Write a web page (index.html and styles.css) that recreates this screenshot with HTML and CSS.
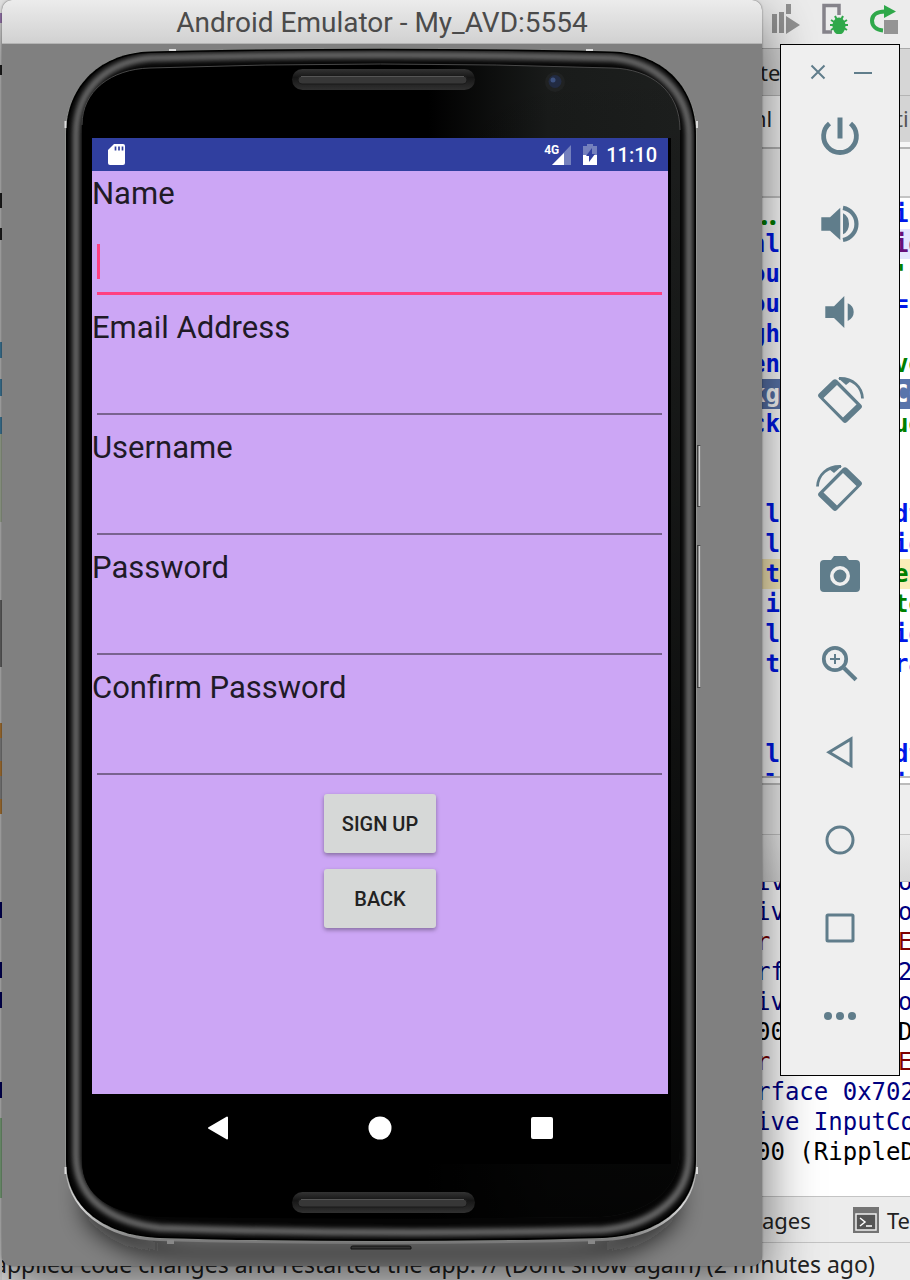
FILE: index.html
```html
<!DOCTYPE html>
<html lang="en">
<head>
<meta charset="utf-8">
<title>Android Emulator - My_AVD:5554</title>
<link rel="stylesheet" href="styles.css">
</head>
<body>
<div class="desktop">

  <main class="ide">
    <div class="gutter"></div>
    <div class="ide-tools">
      <svg width="30" height="32" viewBox="0 0 30 32" fill="#929292"><path d="M1 12h5v19H1zM8 10h5v21H8zM15 2h5v10h-5zM15 14l14 9-14 9z"/></svg>
      <svg width="28" height="32" viewBox="0 0 28 32"><path d="M11 30H3V3.500h15V13" fill="none" stroke="#85838a" stroke-width="3.500"/><path d="M10 18l16 10M10 28l16-10M9 23h18M14 14l2 4M22 14l-2 4" stroke="#2fa84a" stroke-width="2"/><ellipse cx="18" cy="24" rx="6.500" ry="8.500" fill="#2fa84a"/></svg>
      <svg width="30" height="32" viewBox="0 0 30 32"><path d="M14 28.500C7 28 3 24 3 18.500 3 13 8 9.500 16 9.500" fill="none" stroke="#2fa84a" stroke-width="4"/><path d="M15 3l12 6.500L15 16z" fill="#2fa84a"/><path d="M15 18h14v14H15z" fill="#949494"/></svg>
    </div>
    <div class="ide-nav"><span>te</span></div>
    <div class="ide-tabs"><span>ml</span><span class="tab-idle">ti</span></div>
    <div class="ide-crumb"></div>
    <div class="editor">
      <div class="line"><b class="str fold">..</b><b>in</b></div>
      <div class="line"><b>nl</b><b class="attr">id</b></div>
      <div class="line"><b>ou</b><b class="str">'n</b></div>
      <div class="line"><b>ou</b><b>="</b></div>
      <div class="line"><b>gh</b></div>
      <div class="line"><b>en</b><b class="str">ve</b></div>
      <div class="line selected"><b>kg</b><b>CC</b></div>
      <div class="line"><b>ck</b><b class="str">ue</b></div>
      <div class="line"></div>
      <div class="line"></div>
      <div class="line"><b>&nbsp;l</b><b>dt</b></div>
      <div class="line"><b>&nbsp;l</b><b>ig</b></div>
      <div class="line marked"><b>&nbsp;t</b><b class="str">e"</b></div>
      <div class="line"><b>&nbsp;i</b><b class="str">te</b></div>
      <div class="line"><b>&nbsp;l</b><b>ig</b></div>
      <div class="line"><b>&nbsp;t</b><b>ra</b></div>
      <div class="line"></div>
      <div class="line"></div>
      <div class="line"><b>&nbsp;l</b><b>dt</b></div>
      <div class="line"><b>&nbsp;l</b><b>id</b></div>
    </div>
    <div class="split"></div>
    <div class="pane-head"></div>
    <div class="pane-tools"></div>
    <div class="console">
      <div class="log"><span>iv</span><span>o</span></div>
      <div class="log"><span>iv</span><span>o</span></div>
      <div class="log error"><span>r</span><span>E</span></div>
      <div class="log"><span>rf</span><span>2</span></div>
      <div class="log"><span>iv</span><span>o</span></div>
      <div class="log plain"><span>00</span><span>D</span></div>
      <div class="log error"><span>r</span><span>E</span></div>
      <div class="log whole">rface 0x702</div>
      <div class="log whole">ive InputCo</div>
      <div class="log whole plain">00 (RippleD</div>
    </div>
    <div class="ide-bottom">
      <span class="bottom-tab">ages</span>
      <svg width="26" height="26" viewBox="0 0 26 26"><path d="M0 0h26v26H0z" fill="#747474"/><path d="M3 7h20v16H3z" fill="#555" stroke="#eee" stroke-width="1.500"/><path d="M7 11l5 4-5 4M13 19h6" fill="none" stroke="#fff" stroke-width="1.500"/></svg>
      <span>Te</span>
    </div>
    <div class="ide-status">applied code changes and restarted the app. // (Dont show again) (2 minutes ago)</div>
  </main>

  <section class="emulator">
    <header class="titlebar">Android Emulator - My_AVD:5554</header>
    <div class="device">
      <svg class="shell" viewBox="2 44 760 1222" width="760" height="1222">
        <defs>
          <filter id="soft" x="-10%" y="-10%" width="120%" height="120%"><feGaussianBlur stdDeviation="2.500"/></filter>
          <filter id="haze" x="-20%" y="-80%" width="140%" height="260%"><feGaussianBlur stdDeviation="13"/></filter>
          <linearGradient id="glass" x1="0" x2="1" y1="0" y2="0"><stop offset=".58" stop-color="#000"/><stop offset=".78" stop-color="#191b1a"/><stop offset="1" stop-color="#1d1f1e"/></linearGradient>
          <linearGradient id="fade" x1="0" x2="0" y1="0" y2="1"><stop offset="0" stop-color="#000" stop-opacity="0"/><stop offset=".5" stop-color="#000" stop-opacity=".4"/><stop offset="1" stop-color="#000" stop-opacity=".85"/></linearGradient>
          <linearGradient id="slot" x1="0" x2="0" y1="0" y2="1"><stop offset="0" stop-color="#333"/><stop offset=".4" stop-color="#161616"/><stop offset="1" stop-color="#303030"/></linearGradient>
          <linearGradient id="rim" x1="0" x2="0" y1="0" y2="1"><stop offset="0" stop-color="#9a9d98"/><stop offset=".2" stop-color="#989898"/><stop offset=".93" stop-color="#989898"/><stop offset=".97" stop-color="#d8d8d8"/><stop offset="1" stop-color="#777"/></linearGradient>
          <clipPath id="case"><path id="outline" d="M66 135C66 83 103 53 150 51.500Q380 46 612 51.500C659 53 696 83 696 135V1160C696 1209 655 1236 602 1238Q380 1244 160 1238C107 1236 66 1209 66 1160Z"/></clipPath>
        </defs>
        <path d="M90 1175Q120 1248 200 1250H562Q642 1248 672 1175V1215Q640 1254 560 1256H202Q122 1254 90 1215Z" fill="#111" stroke="#111" stroke-width="8" opacity=".85" filter="url(#haze)"/>
        <use href="#outline" fill="url(#rim)" stroke="url(#rim)" stroke-width="2" transform="translate(0 2)"/>
        <use href="#outline" fill="#050505" stroke="#8b8e8a" stroke-width="1"/>
        <g clip-path="url(#case)">
          <path d="M76 135C76 88 108 62 150 58Q380 52 612 58C656 62 689 92 689 135V1155C689 1199 650 1226 602 1230Q380 1236 160 1228C112 1222 76 1200 76 1155Z" fill="none" stroke="#6a6a6a" stroke-width="7" filter="url(#soft)"/>
          <use href="#outline" fill="none" stroke="#000" stroke-width="3"/>
        </g>
        <path d="M82 125C82 91 111 69 150 68Q380 60 612 68C651 69 680 91 680 130V1150C680 1192 645 1214 602 1217Q380 1220 160 1217C111 1214 82 1197 82 1160Z" fill="url(#glass)"/>
        <path d="M82 125C82 91 111 69 150 68Q380 60 612 68C651 69 680 91 680 130V1150C680 1192 645 1214 602 1217Q380 1220 160 1217C111 1214 82 1197 82 1160Z" fill="url(#fade)"/>
        <path d="M82 125C82 91 111 69 150 68Q380 60 612 68C651 69 680 91 680 130" fill="none" stroke="#484848"/>
        <path d="M92 138h579v1026H92z" fill="#000"/>
        <g id="speaker"><rect x="292" y="69" width="183" height="21" rx="10.500" fill="url(#slot)"/><rect x="298" y="76" width="169" height="8" rx="4" fill="#373737" stroke="#1b1b1b"/><path d="M301 76.500h163" stroke="#555"/></g>
        <use href="#speaker" y="1123"/>
        <circle cx="555" cy="82" r="10" fill="#202222"/><circle cx="555" cy="81.500" r="6.500" fill="#222b42"/><circle cx="553" cy="80" r="2.500" fill="#3d5280"/>
        <g fill="#ddd"><path d="M169 49h7v2h-7zM586 49h7v2h-7zM64.500 121h2v7h-2zM696 121h2v7h-2zM64.500 1167h2v7h-2zM696 1167h2v7h-2z"/></g>
        <path d="M167 1240h7v4h-7zM588 1240h7v4h-7z" fill="#888"/>
        <path d="M351 1249v-2q0-1 2-1h56q2 0 2 1v2z" fill="#333" stroke="#111"/>
        <path d="M697 445h2q2 0 2 2v58q0 2-2 2h-2zM697 545h2q2 0 2 2v139q0 2-2 2h-2z" fill="#444"/>
        <path d="M699.500 446v60M699.500 546v141" stroke="#ccc" stroke-width="2"/>
      </svg>

      <div class="screen">
        <div class="statusbar">
          <svg width="18" height="22" viewBox="0 0 18 22"><path d="M6 0h9q2 0 2 2v17q0 2-2 2H2q-2 0-2-2V6z" fill="#fff"/><path d="M7.500 2.500v4M11 2.500v4M14.500 2.500v4" stroke="#303f9f" stroke-width="1.700"/></svg>
          <span class="network">4G</span>
          <svg class="signal" width="20" height="20" viewBox="0 0 20 20"><path d="M19 0v20H0z" fill="#7480bd"/><path d="M12 8v12H0z" fill="#fff"/></svg>
          <svg class="battery" width="14" height="21" viewBox="0 0 14 21"><path d="M0 2h4V0h6v2h4v9H0z" fill="#7480bd"/><path d="M0 11h14v10H0z" fill="#fff"/><path d="M9 4l-6 8h3v6l6-8H9z" fill="#303f9f"/></svg>
          <time>11:10</time>
        </div>
        <form class="form">
          <div class="field focused">
            <label for="name">Name</label>
            <input id="name" type="text"><span class="caret"></span>
          </div>
          <div class="field"><label for="email">Email Address</label><input id="email" type="email"></div>
          <div class="field"><label for="user">Username</label><input id="user" type="text"></div>
          <div class="field"><label for="pass">Password</label><input id="pass" type="password"></div>
          <div class="field"><label for="confirm">Confirm Password</label><input id="confirm" type="password"></div>
          <div class="actions">
            <button type="button">SIGN UP</button>
            <button type="button">BACK</button>
          </div>
        </form>
        <nav class="navbar">
          <button type="button" aria-label="Back"><svg width="24" height="24" viewBox="0 0 24 24"><path d="M3 12L21 1.500v21z" fill="#fff" stroke="#fff" stroke-width="2" stroke-linejoin="round"/></svg></button>
          <button type="button" aria-label="Home"><svg width="24" height="24" viewBox="0 0 24 24"><circle cx="12" cy="12" r="11.500" fill="#fff"/></svg></button>
          <button type="button" aria-label="Overview"><svg width="24" height="24" viewBox="0 0 24 24"><rect x="1" y="1" width="22" height="22" rx="2" fill="#fff"/></svg></button>
        </nav>
      </div>
    </div>
  </section>

  <aside class="controls">
    <div class="window-buttons">
      <button type="button" aria-label="Close"><svg width="18" height="18" viewBox="0 0 18 18"><path d="M2.500 2.500l13 13M15.500 2.500l-13 13"/></svg></button>
      <button type="button" aria-label="Minimize"><svg width="18" height="18" viewBox="0 0 18 18"><path d="M0 10h18"/></svg></button>
    </div>
    <button type="button" aria-label="Power"><svg width="48" height="48" viewBox="0 0 48 48"><path d="M13.500 11.500A16.400 16.400 0 1 0 34.500 11.500" stroke-width="4.800"/><path d="M24 5.500v21" stroke-width="5"/></svg></button>
    <button type="button" aria-label="Volume up"><svg width="48" height="48" viewBox="0 0 48 48"><path class="solid" d="M5.300 17.300H14L24.300 7.700V40L14 30.700H5.300zM27 13.300Q33 16.500 33 24T27 34.300z"/><path d="M27 7.900A16.300 16.300 0 0 1 27 40" stroke-width="4.200"/></svg></button>
    <button type="button" aria-label="Volume down"><svg width="48" height="48" viewBox="0 0 48 48"><path class="solid" d="M9.300 18.300H18L28.300 8V40L18 30H9.300zM31.700 15.300Q37.700 18 37.700 24T31.700 33z"/></svg></button>
    <button type="button" aria-label="Rotate left"><svg width="48" height="48" viewBox="0 0 48 48"><path class="solid" fill-rule="evenodd" d="M3 17.500L17 4Q19 2.500 21 4L45 28.500Q47 30.500 45 32.500L31 46Q29 48 27 46L3 21.500Q1 19.500 3 17.500zM7.500 22L27 41.500 40.500 28.500 21 9z"/><path class="solid" d="M22 2L30 9l5-4Q28 1.500 22 2z"/><path d="M23 2.500C37 2 46 11 46.500 22.500" stroke-width="2.800"/></svg></button>
    <button type="button" aria-label="Rotate right"><svg class="mirrored" width="48" height="48" viewBox="0 0 48 48"><path class="solid" fill-rule="evenodd" d="M3 17.500L17 4Q19 2.500 21 4L45 28.500Q47 30.500 45 32.500L31 46Q29 48 27 46L3 21.500Q1 19.500 3 17.500zM7.500 22L27 41.500 40.500 28.500 21 9z"/><path class="solid" d="M22 2L30 9l5-4Q28 1.500 22 2z"/><path d="M23 2.500C37 2 46 11 46.500 22.500" stroke-width="2.800"/></svg></button>
    <button type="button" aria-label="Take screenshot"><svg width="48" height="48" viewBox="0 0 48 48"><path class="solid" d="M8 8h7l3-4h12l3 4h7q4 0 4 4v24q0 4-4 4H8q-4 0-4-4V12q0-4 4-4z"/><circle cx="24" cy="24" r="8.200" stroke="#efefef" stroke-width="3.600"/></svg></button>
    <button type="button" aria-label="Zoom"><svg width="48" height="48" viewBox="0 0 48 48"><circle cx="19" cy="19" r="11.200" stroke-width="3.700"/><path d="M14 19h10M19 14v10" stroke-width="2"/><path d="M28 28l12 11.700" stroke-width="4.200"/></svg></button>
    <button type="button" aria-label="Back"><svg width="48" height="48" viewBox="0 0 48 48"><path d="M13 24.200L35 11v26.500z" stroke-width="3"/></svg></button>
    <button type="button" aria-label="Home"><svg width="48" height="48" viewBox="0 0 48 48"><circle cx="24" cy="24" r="13" stroke-width="3"/></svg></button>
    <button type="button" aria-label="Overview"><svg width="48" height="48" viewBox="0 0 48 48"><rect x="11" y="11" width="26" height="26" rx="1" stroke-width="3"/></svg></button>
    <button type="button" aria-label="More"><svg width="48" height="48" viewBox="0 0 48 48"><g class="solid"><circle cx="12" cy="24" r="4"/><circle cx="24" cy="24" r="4"/><circle cx="36" cy="24" r="4"/></g></svg></button>
  </aside>
</div>
</body>
</html>
```
FILE: styles.css
```css
* { box-sizing: border-box; }
body { margin: 0; }
svg { display: block; flex: none; }
button { border: 0; padding: 0; background: none; font: inherit; color: inherit; }

.desktop {
  position: relative;
  overflow: hidden;
  min-height: 100vh;
  background: #ececec;
  font-family: "Noto Sans", sans-serif;
}

/* editor window behind the emulator */
.ide {
  position: relative;
  display: flex;
  flex-direction: column;
  min-height: 1280px;
  font-size: 22px;
  color: #222;
  white-space: nowrap;
}
.gutter {
  position: absolute;
  left: 0;
  top: 0;
  bottom: 0;
  width: 2px;
  background: linear-gradient(#eee 0 13px, #9a78b0 13px 23px, #ddd 23px 65px, #222 65px 75px, #ddd 75px 193px, #222 193px 208px, #ddd 208px 228px, #222 228px 240px, #ddd 240px 342px, #4a90b8 342px 358px, #ddd 358px 379px, #4a90b8 379px 396px, #ddd 396px 417px, #4a90b8 417px 434px, #bccbb0 434px 522px, #ddd 522px 600px, #777 600px 667px, #ddd 667px 723px, #c98a3c 723px 738px, #999 738px 761px, #c98a3c 761px 776px, #999 776px 799px, #c98a3c 799px 814px, #ddd 814px 902px, #006 902px 918px, #ddd 918px 962px, #006 962px 978px, #ddd 978px 992px, #006 992px 1008px, #ddd 1008px 1082px, #006 1082px 1098px, #ddd 1098px 1118px, #8fc08f 1118px 1198px, #ddd 1198px);
}
.ide-tools {
  display: flex;
  gap: 20px;
  height: 49px;
  padding: 2px 0 0 771px;
  background: #ececec;
  border-bottom: 1px solid #aaa;
}
.ide-nav {
  display: flex;
  align-items: center;
  height: 47px;
  padding-left: 760px;
  background: #d6d6d6;
  border-bottom: 1px solid #b4b4b4;
}
.ide-tabs {
  display: grid;
  grid-template-columns: 149px 1fr;
  height: 53px;
  padding-left: 746px;
  line-height: 44px;
  background: #f6f6f6;
  border-bottom: 2px solid #b4b4b4;
}
.tab-idle { height: 46px; color: #555; background: #d4d4d4; }
.ide-crumb { height: 49px; background: #f0f0f0; border-bottom: 2px solid #c4c4c4; }
.editor {
  height: 578px;
  padding-top: 1px;
  overflow: hidden;
  background: #fff;
  font: 24px/30px "DejaVu Sans Mono", monospace;
  color: #0018e8;
}
.line { display: grid; grid-template-columns: 143px 1fr; height: 30px; padding-left: 751px; }
.str { color: #008000; }
.fold { padding-left: 9px; font-family: "Open Sans", sans-serif; font-size: 30px; }
.attr { color: #660e7a; background: #e4e4ff; }
.selected { color: #fff; background: #5974ab; }
.marked { background: #fbedb9; }
.split { height: 9px; background: #fff; border: solid #bbb; border-width: 2px 0; }
.pane-head { height: 50px; background: #eee; border-bottom: 1px solid #c4c4c4; }
.pane-tools { height: 47px; background: linear-gradient(#ebebeb, #d8d8d8); border-bottom: 1px solid #bbb; }
.console {
  display: flex;
  flex-direction: column;
  justify-content: flex-end;
  height: 314px;
  padding-bottom: 29px;
  overflow: hidden;
  background: #fff;
  font: 24px/30px "DejaVu Sans Mono", monospace;
  color: #000080;
}
.log { display: grid; grid-template-columns: 142px 1fr; flex: none; height: 30px; padding-left: 756px; }
.whole { display: block; }
.error { color: #7f0000; }
.plain { color: #000; }
.ide-bottom {
  display: flex;
  align-items: center;
  gap: 8px;
  height: 47px;
  padding-left: 762px;
  background: #ececec;
  border: solid #c4c4c4;
  border-width: 1px 0;
}
.bottom-tab { width: 86px; }
.ide-status { flex: 1; margin-left: -6px; line-height: 42px; font-size: 23px; background: #ececec; }

/* emulator window */
.emulator {
  position: absolute;
  left: 2px;
  top: 0;
  width: 760px;
  border-radius: 10px;
  background: #808080;
  box-shadow: 0 20px 55px rgba(0, 0, 0, .6), 0 0 2px rgba(0, 0, 0, .5);
}
.titlebar {
  height: 44px;
  border-bottom: 1px solid #b4b4b4;
  border-radius: 10px 10px 0 0;
  background: linear-gradient(#ececec, #d1d1d1);
  font: 28px/46px Roboto, sans-serif;
  color: #4b4b4b;
  text-align: center;
}
.device { position: relative; padding: 94px 94px 102px 90px; }
.shell { position: absolute; left: 0; top: 0; }
.screen { position: relative; font-family: Roboto, sans-serif; }
.statusbar {
  display: flex;
  align-items: center;
  height: 33px;
  padding: 0 11px 0 16px;
  background: #303f9f;
  color: #fff;
}
.network { margin: 0 0 10px auto; font-size: 12px; line-height: 14px; font-weight: 700; }
.signal { margin-left: -7px; }
.battery { margin: 0 9px 0 11px; }
.statusbar time { font-size: 20px; font-weight: 500; }
.form { height: 923px; padding-top: 1px; background: #cca6f5; }
.field { position: relative; height: 120px; }
.field label { display: block; font-size: 31px; line-height: 44px; color: #201a26; }
.field input {
  display: block;
  width: calc(100% - 11px);
  height: 65px;
  margin-left: 5px;
  padding: 0 4px;
  border: 0;
  border-bottom: 2px solid #79638f;
  outline: 0;
  background: none;
  font: 31px Roboto, sans-serif;
}
.focused { height: 134px; }
.focused input { height: 79px; border-bottom: 3px solid #ff4081; }
.caret { position: absolute; left: 5px; top: 72px; width: 3px; height: 35px; background: #ff4081; }
.actions { display: flex; flex-direction: column; align-items: center; gap: 16px; padding-top: 8px; }
.actions button {
  width: 112px;
  height: 59px;
  border-radius: 3px;
  background: #d6d8d7;
  box-shadow: 0 2px 4px rgba(0, 0, 0, .35);
  font-size: 20px;
  font-weight: 500;
  color: #222;
}
.navbar { display: grid; grid-template-columns: repeat(3, 1fr); height: 70px; padding: 0 45px 2px; background: #000; }
.navbar button { display: flex; align-items: center; justify-content: center; }

/* emulator side controls */
.controls {
  position: absolute;
  left: 780px;
  top: 44px;
  width: 120px;
  padding-bottom: 15px;
  border: 1px solid #000;
  background: #efefef;
}
.controls button { display: flex; align-items: center; justify-content: center; width: 100%; height: 88px; }
.controls svg { overflow: visible; fill: none; stroke: #607d8b; stroke-width: 2; }
.controls .solid { fill: #607d8b; stroke: none; }
.controls .mirrored { transform: scaleX(-1); }
.window-buttons { display: flex; justify-content: center; gap: 27px; height: 47px; }
.controls .window-buttons button { width: 18px; height: 54px; }
```
